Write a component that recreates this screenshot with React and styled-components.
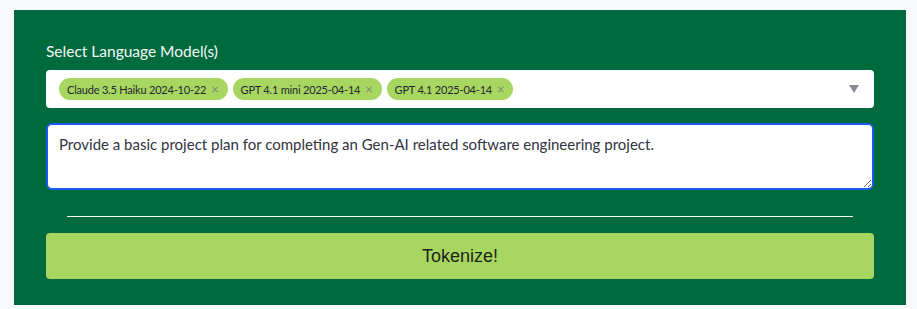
import React, { useEffect, useRef } from "react";
import styled, { createGlobalStyle } from "styled-components";

const Global = createGlobalStyle`
  html, body { margin: 0; padding: 0; background: #f8f9fb; }
  body { font-family: "Lato", "Noto Sans", sans-serif; }
`;

const Panel = styled.section`
  box-sizing: border-box;
  margin: 10px 11px 0 14px;
  width: 892px;
  height: 295px;
  background: #006a3f;
  padding: 31px 32px 26px 32px;
  display: flex;
  flex-direction: column;
`;

const Label = styled.label`
  color: #f4f7f4;
  font-size: 15.5px;
  line-height: 20px;
  margin-bottom: 9px;
`;

const Select = styled.div`
  box-sizing: border-box;
  height: 38px;
  background: #fff;
  border-radius: 4px;
  display: flex;
  align-items: center;
  padding: 0 13px;
  gap: 5px;
`;

const Chip = styled.span`
  box-sizing: border-box;
  height: 22px;
  border-radius: 11px;
  background: #a7d761;
  color: #262730;
  font-size: 11px;
  letter-spacing: -0.2px;
  display: inline-flex;
  align-items: center;
  padding: 0 9px 0 8px;
  gap: 5px;
  white-space: nowrap;
`;

const ChipX = styled.span`
  color: #7c8a74;
  font-size: 13px;
  line-height: 1;
`;

const Arrow = styled.svg`
  margin-left: auto;
  margin-right: 2px;
`;

const TextArea = styled.textarea`
  box-sizing: border-box;
  margin-top: 15px;
  height: 67px;
  width: 100%;
  border: 2px solid #1c5cf5;
  border-radius: 6px;
  outline: none;
  padding: 8px 11px;
  font-family: inherit;
  font-size: 15px;
  line-height: 22px;
  color: #31333f;
  background: #fff;
  caret-color: #31333f;
`;

const Rule = styled.hr`
  margin: 26px 21px 0 21px;
  border: 0;
  border-top: 1px solid #ffffff;
  height: 0;
`;

const Button = styled.button`
  margin-top: 16px;
  height: 46px;
  width: 100%;
  border: 0;
  border-radius: 4px;
  background: #a7d761;
  color: #1d2417;
  font-family: "Liberation Sans", Arial, sans-serif;
  font-size: 18px;
  cursor: pointer;
`;

const models = [
  "Claude 3.5 Haiku 2024-10-22",
  "GPT 4.1 mini 2025-04-14",
  "GPT 4.1 2025-04-14",
];

const prompt =
  "Provide a basic project plan for completing an Gen-AI related software engineering project.";

export default function App() {
  const ref = useRef(null);
  useEffect(() => {
    const el = ref.current;
    if (el) {
      el.focus();
      el.setSelectionRange(prompt.length, prompt.length);
    }
  }, []);
  return (
    <>
      <Global />
      <Panel>
        <Label>Select Language Model(s)</Label>
        <Select>
          {models.map((m) => (
            <Chip key={m}>
              {m}
              <ChipX>×</ChipX>
            </Chip>
          ))}
          <Arrow width="10" height="8" viewBox="0 0 10 8">
            <path d="M0 0 H10 L5 8 Z" fill="#8b8c99" />
          </Arrow>
        </Select>
        <TextArea ref={ref} defaultValue={prompt} spellCheck={false} />
        <Rule />
        <Button>Tokenize!</Button>
      </Panel>
    </>
  );
}
